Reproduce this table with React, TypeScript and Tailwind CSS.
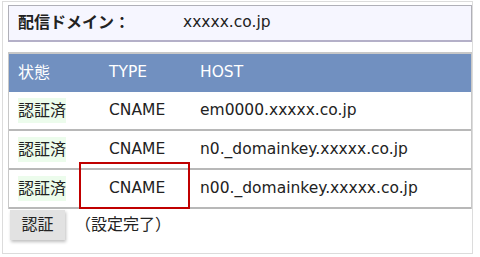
import React from 'react';

const rows = [
  { status: '認証済', type: 'CNAME', host: 'em0000.xxxxx.co.jp' },
  { status: '認証済', type: 'CNAME', host: 'n0._domainkey.xxxxx.co.jp' },
  { status: '認証済', type: 'CNAME', host: 'n00._domainkey.xxxxx.co.jp', marked: true },
];

export default function App() {
  return (
    <div
      className="w-[480px] h-[257px] bg-white text-[15.5px] text-[#222] pt-[1px] pl-[2px]"
      style={{ fontFamily: '"DejaVu Sans", "Noto Sans CJK JP", sans-serif' }}
    >
      <div className="w-[471px] h-[253px] border border-[#dcdcdc] pt-[3px] pl-[5px]">
        {/* domain */}
        <div className="flex items-center h-[37px] bg-[#f6f6ff] border border-[#b0b0b8] border-b-2 border-b-[#b4b0c8] pl-[9px]">
          <span className="font-bold w-[165px] text-[16px]">配信ドメイン：</span>
          <span>xxxxx.co.jp</span>
        </div>

        {/* records */}
        <div className="mt-[10px] border-l border-r border-[#c8c8c8]">
          <div className="flex items-center h-[40px] bg-[#7190c0] text-white border-t-2 border-[#c8c8c8]">
            <div className="w-[100px] pl-[9px] text-[16px]">状態</div>
            <div className="w-[91px]">TYPE</div>
            <div>HOST</div>
          </div>
          {rows.map((r, i) => (
            <div
              key={i}
              className="relative flex items-center h-[39px] border-b-2 border-[#b8b8b8]"
            >
              <div className="w-[100px] pl-[9px] text-[16px]">
                <span className="bg-[#ecfcec] py-[3px]">{r.status}</span>
              </div>
              <div className="w-[91px]">{r.type}</div>
              <div>{r.host}</div>
              {r.marked && (
                <div className="absolute left-[70px] top-[-8px] w-[111px] h-[47px] border-2 border-[#c00000]" />
              )}
            </div>
          ))}
        </div>

        <div className="flex items-center mt-[1px] text-[16px]">
          <button className="ml-[2px] w-[55px] h-[30px] bg-[#e2e2e2] text-[#222] shadow-[1px_2px_3px_rgba(0,0,0,0.25)]">
            認証
          </button>
          <span className="ml-[10px]">（設定完了）</span>
        </div>
      </div>
    </div>
  );
}
